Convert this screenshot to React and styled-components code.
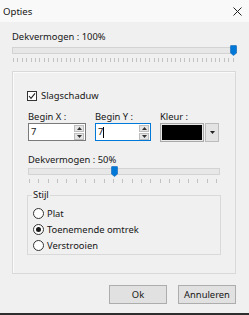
import React from 'react';
import styled, { createGlobalStyle } from 'styled-components';

const Global = createGlobalStyle`
  html, body { margin: 0; padding: 0; background: #f0f0f0; }
  body { font-family: "Noto Sans", "Segoe UI", sans-serif; }
  * { box-sizing: border-box; }
`;

const Window = styled.div`
  width: 249px;
  height: 315px;
  display: flex;
  flex-direction: column;
  background: #f0f0f0;
  overflow: hidden;
  font-size: 9.4px;
  color: #161616;
`;

const TitleBar = styled.div`
  height: 22px;
  flex: none;
  display: flex;
  align-items: center;
  justify-content: space-between;
  padding: 0 7px 0 3px;
  background: #f9f9f9;
  font-size: 9.6px;
`;

const Body = styled.div`
  flex: 1;
  display: flex;
  flex-direction: column;
  padding: 8px 12px 0 12px;
`;

const Label = styled.div`
  line-height: ${p => p.$lh || 13}px;
  margin-top: ${p => p.$mt || 0}px;
  white-space: nowrap;
`;

const SliderWrap = styled.div`
  display: flex;
  flex-direction: column;
  width: ${p => p.$w}px;
  margin-top: ${p => p.$mt || 0}px;
`;

const TrackArea = styled.div`
  position: relative;
  height: 11px;
  display: flex;
  align-items: center;
`;

const Track = styled.div`
  flex: 1;
  height: 7px;
  background: #e7e7e7;
  border: 1px solid #d3d3d3;
`;

const Thumb = styled.svg`
  position: absolute;
  top: 0;
  width: 7px;
  height: 11px;
`;

const Ticks = styled.div`
  display: flex;
  justify-content: space-between;
  margin-top: 2px;
  height: 5px;
  padding: 0 3px 0 1px;
`;

const Tick = styled.div`
  width: 1px;
  height: 4px;
  background: #c2c2c2;
`;

const Group = styled.div`
  width: 224px;
  margin-top: 8px;
  border: 1px solid #d9d9d9;
  box-shadow: 1px 1px 0 #fafafa inset;
  padding: 18px 0 18px 15px;
  display: flex;
  flex-direction: column;
`;

const CheckRow = styled.label`
  display: flex;
  align-items: center;
  gap: 4px;
  line-height: 12px;
  margin-left: -1px;
`;

const CheckBox = styled.span`
  width: 10px;
  height: 10px;
  border: 1px solid #333;
  background: #fff;
  display: flex;
  align-items: center;
  justify-content: center;
`;

const FieldRow = styled.div`
  display: flex;
  gap: 9px;
  margin-top: 9px;
`;

const Field = styled.div`
  display: flex;
  flex-direction: column;
  width: ${p => p.$w}px;
`;

const SpinBox = styled.div`
  height: 18px;
  border: 1px solid ${p => (p.$focus ? '#0078d7' : '#7a7a7a')};
  background: #fff;
  display: flex;
  align-items: center;
  justify-content: space-between;
  padding: 0 1px 0 2px;
`;

const SpinValue = styled.span`
  display: flex;
  align-items: center;
  line-height: 12px;
`;

const Caret = styled.span`
  width: 1px;
  height: 11px;
  background: #000;
`;

const SpinButtons = styled.div`
  display: flex;
  flex-direction: column;
  gap: 1px;
`;

const SpinBtn = styled.div`
  width: 10px;
  height: 7px;
  background: #e5e5e5;
  border: 1px solid #bdbdbd;
  display: flex;
  align-items: center;
  justify-content: center;
`;

const Combo = styled.div`
  height: 19px;
  display: flex;
  gap: 1px;
`;

const Swatch = styled.div`
  flex: 1;
  border: 1px solid #a8a8a8;
  padding: 1px;
  background: #e8e8e8;
`;

const SwatchFill = styled.div`
  width: 100%;
  height: 100%;
  background: ${p => p.$color};
`;

const DropBtn = styled.div`
  width: 14px;
  border: 1px solid #bcbcbc;
  background: #e3e3e3;
  display: flex;
  align-items: center;
  justify-content: center;
`;

const Fieldset = styled.fieldset`
  width: 194px;
  margin: 5px 0 0 -1px;
  padding: 4px 0 1px 5px;
  border: 1px solid #d9d9d9;
  display: flex;
  flex-direction: column;
`;

const Legend = styled.legend`
  padding: 0 1px;
  margin-left: -1px;
  line-height: 12px;
`;

const RadioRow = styled.label`
  display: flex;
  align-items: center;
  gap: 3px;
  height: 16px;
`;

const Radio = styled.span`
  width: 11px;
  height: 11px;
  border-radius: 50%;
  border: 1px solid #333;
  background: #fff;
  display: flex;
  align-items: center;
  justify-content: center;
  &::after {
    content: '';
    width: 5px;
    height: 5px;
    border-radius: 50%;
    background: ${p => (p.$on ? '#1a1a1a' : 'transparent')};
  }
`;

const Buttons = styled.div`
  display: flex;
  justify-content: flex-end;
  gap: 11px;
  margin: 11px 1px 0 0;
`;

const Button = styled.div`
  width: 58px;
  height: 19px;
  background: #e1e1e1;
  border: 1px solid #adadad;
  display: flex;
  align-items: center;
  justify-content: center;
`;

const BottomEdge = styled.div`
  margin-top: auto;
  height: 2px;
  background: #2e2e2e;
  flex: none;
`;

function Slider({ width, value, ticks, mt }) {
  const left = ((width - 7) * value) / 100;
  return (
    <SliderWrap $w={width} $mt={mt}>
      <TrackArea>
        <Track />
        <Thumb viewBox="0 0 7 11" style={{ left }}>
          <path d="M0.5 1 Q0.5 0.5 1 0.5 H6 Q6.5 0.5 6.5 1 V8 L3.5 10.5 L0.5 8 Z" fill="#0078d7" stroke="#1565b8" strokeWidth="0.6" />
        </Thumb>
      </TrackArea>
      <Ticks>
        {Array.from({ length: ticks }).map((_, i) => (
          <Tick key={i} />
        ))}
      </Ticks>
    </SliderWrap>
  );
}

const Arrow = ({ up }) => (
  <svg width="5" height="3" viewBox="0 0 5 3">
    <path d={up ? 'M0 3 L2.5 0 L5 3 Z' : 'M0 0 L5 0 L2.5 3 Z'} fill="#333" />
  </svg>
);

function Spin({ value, focus }) {
  return (
    <SpinBox $focus={focus}>
      <SpinValue>
        {value}
        {focus && <Caret />}
      </SpinValue>
      <SpinButtons>
        <SpinBtn><Arrow up /></SpinBtn>
        <SpinBtn><Arrow /></SpinBtn>
      </SpinButtons>
    </SpinBox>
  );
}

export default function App() {
  return (
    <Window>
      <Global />
      <TitleBar>
        <span>Opties</span>
        <svg width="9" height="9" viewBox="0 0 9 9">
          <path d="M0.5 0.5 L8.5 8.5 M8.5 0.5 L0.5 8.5" stroke="#222" strokeWidth="1" />
        </svg>
      </TitleBar>
      <Body>
        <Label>Dekvermogen : 100%</Label>
        <Slider width={225} value={100} ticks={51} mt={2} />
        <Group>
          <CheckRow>
            <CheckBox>
              <svg width="8" height="8" viewBox="0 0 8 8">
                <path d="M1 4 L3 6.3 L7 1.3" fill="none" stroke="#222" strokeWidth="1.1" />
              </svg>
            </CheckBox>
            Slagschaduw
          </CheckRow>
          <FieldRow>
            <Field $w={58}>
              <Label $lh={12}>Begin X :</Label>
              <Spin value="7" />
            </Field>
            <Field $w={56}>
              <Label $lh={12}>Begin Y :</Label>
              <Spin value="7" focus />
            </Field>
            <Field $w={59}>
              <Label $lh={12}>Kleur :</Label>
              <Combo>
                <Swatch><SwatchFill $color="#000" /></Swatch>
                <DropBtn>
                  <svg width="5" height="3" viewBox="0 0 5 3"><path d="M0 0 L5 0 L2.5 3 Z" fill="#222" /></svg>
                </DropBtn>
              </Combo>
            </Field>
          </FieldRow>
          <Label $mt={11}>Dekvermogen : 50%</Label>
          <Slider width={192} value={45} ticks={21} mt={0} />
          <Fieldset>
            <Legend>Stijl</Legend>
            <RadioRow><Radio />Plat</RadioRow>
            <RadioRow><Radio $on />Toenemende omtrek</RadioRow>
            <RadioRow><Radio />Verstrooien</RadioRow>
          </Fieldset>
        </Group>
        <Buttons>
          <Button>Ok</Button>
          <Button>Annuleren</Button>
        </Buttons>
      </Body>
      <BottomEdge />
    </Window>
  );
}
